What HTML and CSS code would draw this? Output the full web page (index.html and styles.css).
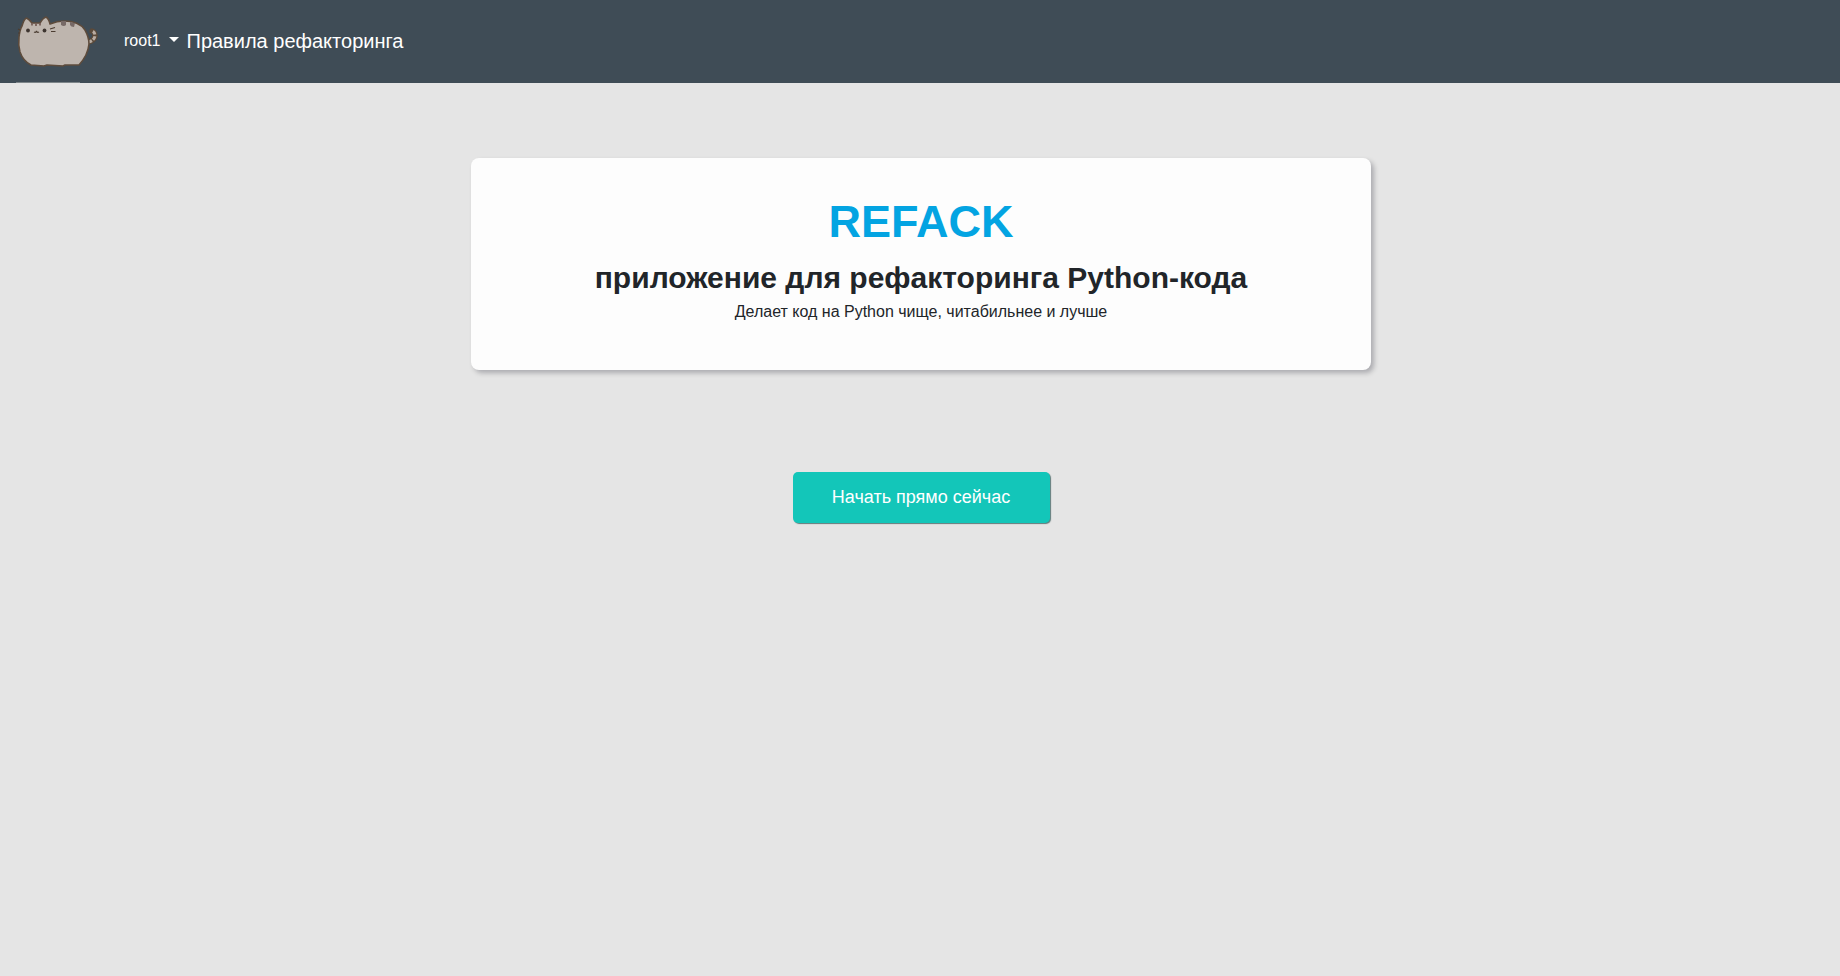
FILE: index.html
```html
<!DOCTYPE html>
<html lang="ru">
<head>
<meta charset="utf-8">
<title>REFACK</title>
<link rel="stylesheet" href="styles.css">
</head>
<body>
<nav class="navbar">
  <a class="brand" href="#" aria-label="Refack">
    <svg class="cat" viewBox="0 0 120 83" width="120" height="83">
      <path d="M88 42Q94 41 95 36Q95 32 92 31" fill="none" stroke="#5b4a3a" stroke-width="5.500" stroke-linecap="round"/>
      <path d="M88 42Q94 41 95 36Q95 32 92 31" fill="none" stroke="#b9ada3" stroke-width="3" stroke-dasharray="4 1.500"/>
      <path d="M19 37Q20 29 22 26Q24 19 26.500 18Q29 19 32 23L40 23Q43 18 46 17Q49 19 50 24Q57 21 64 21Q79 21 85 30Q89 37 89 44Q88 55 79 65L65 65L63 66L47 65L44 66L31 65Q23 61 20 52Q18 45 19 37Z" fill="#beb5ae" stroke="#5d4b3c" stroke-width="1.600" stroke-linejoin="round"/>
      <path d="M32 23v2.500M36 23v3M40 23v2.500" stroke="#765f59" stroke-width="1.800"/>
      <path d="M61 21h5v4q-2 2-5 0zM70 22l5 1-1 4q-3 0-4-2z" fill="#776966"/>
      <circle cx="28" cy="30.500" r="1.900" fill="#3e3530"/>
      <circle cx="44.500" cy="30.500" r="1.900" fill="#3e3530"/>
      <path d="M34 32q2 1 2.500-1q.5 2 2.500 1M50 29l5-1.500M51 31.500h4.500M20 30l-2-1M20 33h-2" fill="none" stroke="#4b3c31" stroke-width="1.200"/>
      <path d="M16 82.500h64" stroke="#7d8589"/>
    </svg>
  </a>
  <a class="user" href="#">root1<span class="caret"></span></a>
  <a class="rules" href="#">Правила рефакторинга</a>
</nav>
<main class="content">
  <section class="card">
    <h1 class="title">REFACK</h1>
    <h2 class="subtitle">приложение для рефакторинга Python-кода</h2>
    <p class="description">Делает код на Python чище, читабильнее и лучше</p>
  </section>
  <a class="start" href="#">Начать прямо сейчас</a>
</main>
</body>
</html>
```
FILE: styles.css
```css
* { box-sizing: border-box; }
body {
  margin: 0;
  min-height: 100vh;
  background: #e5e5e5;
  color: #212529;
  font-family: "Liberation Sans", Arial, sans-serif;
  font-size: 16px;
  line-height: 24px;
}
a { color: #fff; text-decoration: none; }
.navbar {
  display: flex;
  align-items: center;
  height: 83px;
  background: #3f4c56;
}
.brand { display: flex; width: 124px; }
.cat { display: block; }
.user { display: flex; align-items: center; width: 62.5px; margin-top: -2px; }
.caret {
  margin: -3px 0 0 9px;
  border-top: 5px solid #fff;
  border-right: 5px solid transparent;
  border-left: 5px solid transparent;
}
.rules { margin-top: -2px; font-size: 20px; line-height: 30px; }
.content {
  display: flex;
  flex-direction: column;
  align-items: center;
  padding: 75px 0 0 2px;
}
.card {
  width: 900px;
  height: 212px;
  padding-top: 37px;
  border-radius: 8px;
  background: #fdfdfd;
  box-shadow: 3px 3px 5px rgba(0, 0, 20, .25);
  text-align: center;
}
.title { margin: 0; color: #03a4e2; font-size: 45px; line-height: 54px; }
.subtitle { margin: 11px 0 0; font-size: 30px; line-height: 36px; }
.description { margin: 4px 0 0; }
.start {
  width: 257px;
  height: 51px;
  margin-top: 102px;
  border-radius: 5px;
  background: #13c6b9;
  box-shadow: 1px 1px 1px #607b7b;
  font-size: 18px;
  line-height: 50px;
  text-align: center;
}
```
